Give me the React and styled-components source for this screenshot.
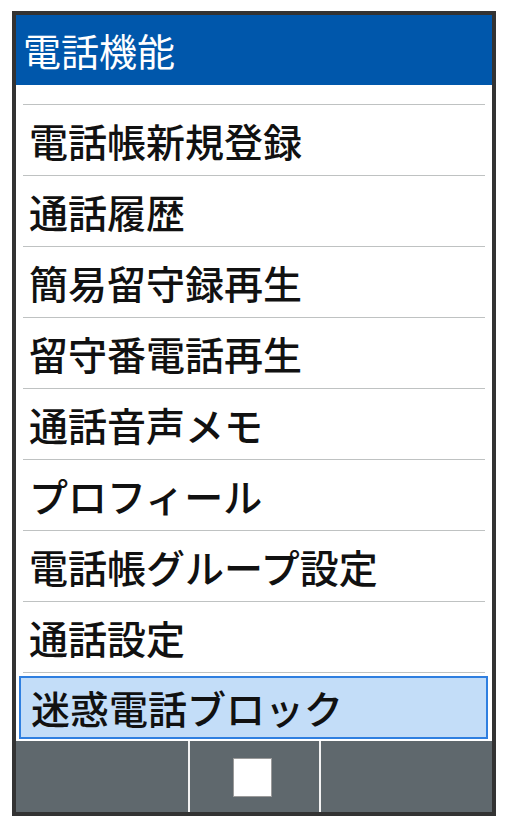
import React from "react";
import styled, { createGlobalStyle } from "styled-components";

const GlobalStyle = createGlobalStyle`
  html, body {
    margin: 0;
    padding: 0;
    background: #ffffff;
  }
  body {
    font-family: "Noto Sans CJK JP", "Noto Sans", sans-serif;
  }
`;

const Frame = styled.div`
  box-sizing: border-box;
  width: 484px;
  height: 805px;
  margin: 11px 0 0 12px;
  border: 4px solid #333333;
  display: flex;
  flex-direction: column;
  background: #ffffff;
  overflow: hidden;
`;

const Header = styled.div`
  height: 70px;
  flex: none;
  background: #0057ab;
  color: #ffffff;
  display: flex;
  align-items: center;
  padding-left: 7px;
  font-size: 38px;
  line-height: 1;
`;

const List = styled.div`
  flex: 1;
  padding-top: 19px;
  display: flex;
  flex-direction: column;
`;

const Divider = styled.div`
  height: 1px;
  margin: 0 7px;
  background: #bfc2c2;
  flex: none;
`;

const Item = styled.div`
  box-sizing: border-box;
  height: ${(p) => (p.$selected ? "63px" : "70px")};
  margin: ${(p) => (p.$selected ? "3px 4px 2px 3px" : "0")};
  padding-left: ${(p) => (p.$selected ? "10px" : "13px")};
  border: ${(p) => (p.$selected ? "2px solid #2f7fe0" : "none")};
  background: ${(p) => (p.$selected ? "#c3ddf8" : "transparent")};
  display: flex;
  align-items: center;
  font-size: 39px;
  font-weight: 500;
  line-height: 1;
  color: #111111;
  flex: none;
`;

const SoftKeys = styled.div`
  height: 71px;
  flex: none;
  display: flex;
  background: #5f686d;
`;

const Key = styled.div`
  width: ${(p) => p.$w}px;
  flex: none;
  display: flex;
  align-items: center;
  justify-content: center;
`;

const KeyDivider = styled.div`
  width: 2px;
  flex: none;
  background: #f2f2f2;
`;

const StopMark = styled.div`
  box-sizing: border-box;
  width: 39px;
  height: 39px;
  margin: 2px 4px 0 0;
  background: #ffffff;
  border: 1px solid #9a9a9a;
`;

const items = [
  "電話帳新規登録",
  "通話履歴",
  "簡易留守録再生",
  "留守番電話再生",
  "通話音声メモ",
  "プロフィール",
  "電話帳グループ設定",
  "通話設定",
  "迷惑電話ブロック",
];

export default function App() {
  return (
    <>
      <GlobalStyle />
      <Frame>
        <Header>電話機能</Header>
        <List>
          {items.map((label, i) => (
            <React.Fragment key={label}>
              <Divider />
              <Item $selected={i === items.length - 1}>{label}</Item>
            </React.Fragment>
          ))}
        </List>
        <SoftKeys>
          <Key $w={172} />
          <KeyDivider />
          <Key $w={129}>
            <StopMark />
          </Key>
          <KeyDivider />
          <Key $w={171} />
        </SoftKeys>
      </Frame>
    </>
  );
}
